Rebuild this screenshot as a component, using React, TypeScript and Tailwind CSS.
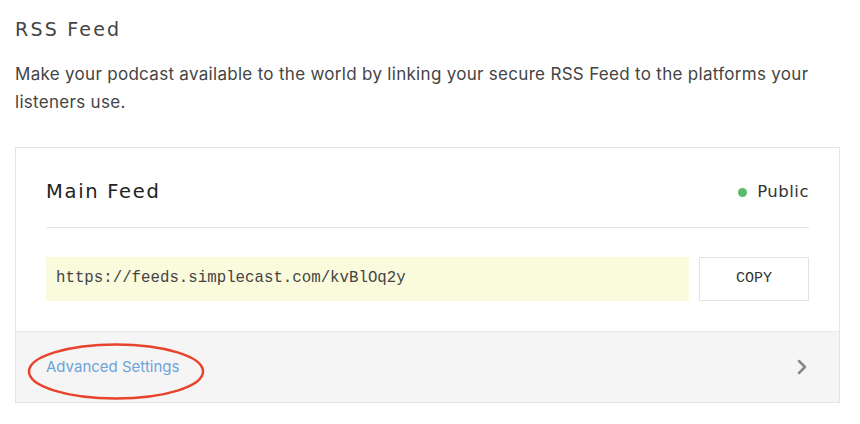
import { ChevronRight } from 'lucide-react'

export default function App() {
  return (
    <div className="min-h-screen w-[860px] bg-white pl-[15px] pr-[20px] pt-[15px] font-['Inter',sans-serif]">
      {/* Section header */}
      <h2 className="font-['DejaVu_Sans',sans-serif] text-[19px] leading-[28px] tracking-[2.2px] text-[#444]">RSS Feed</h2>
      <p className="mt-[17px] text-[17px] leading-[28px] tracking-[0.3px] text-[#444]">
        Make your podcast available to the world by linking your secure RSS Feed to the platforms your listeners use.
      </p>

      {/* Feed card */}
      <div className="mt-[31px] border border-[#e4e4e4] bg-white">
        <div className="px-[30px]">
          <div className="mt-[30px] mb-[21px] flex h-[28px] items-center justify-between">
            <h3 className="font-['DejaVu_Sans',sans-serif] text-[19.5px] tracking-[1.7px] text-[#222]">Main Feed</h3>
            <div className="flex items-center gap-[10px]">
              <span className="h-[9px] w-[9px] rounded-full bg-[#5cb96f]" />
              <span className="font-['DejaVu_Sans',sans-serif] text-[16.5px] tracking-[0.5px] text-[#333]">Public</span>
            </div>
          </div>
          <div className="h-px bg-[#e4e4e4]" />
          <div className="mt-[29px] mb-[30px] flex gap-[10px]">
            <div className="flex h-[44px] flex-1 items-center bg-[#fafadc] px-[10px] font-['Liberation_Mono',monospace] text-[15.75px] text-[#444]">
              https://feeds.simplecast.com/kvBlOq2y
            </div>
            <button className="flex h-[44px] w-[110px] items-center justify-center border border-[#e2e2e2] bg-white font-['Liberation_Mono',monospace] text-[15px] text-[#333]">
              COPY
            </button>
          </div>
        </div>

        {/* Footer */}
        <div className="relative flex h-[71px] items-center justify-between border-t border-[#e8e8e8] bg-[#f5f5f5] px-[30px]">
          <span className="text-[15px] text-[#6ea3da]">Advanced Settings</span>
          <ChevronRight className="mr-[-5px] h-[24px] w-[24px] text-[#888]" strokeWidth={2.5} />
          {/* annotation */}
          <svg className="absolute left-[11px] top-[11px]" width="180" height="60" viewBox="0 0 180 60">
            <ellipse cx="89" cy="28.5" rx="87" ry="27" fill="none" stroke="#e8432c" strokeWidth="2.5" />
          </svg>
        </div>
      </div>
    </div>
  )
}
